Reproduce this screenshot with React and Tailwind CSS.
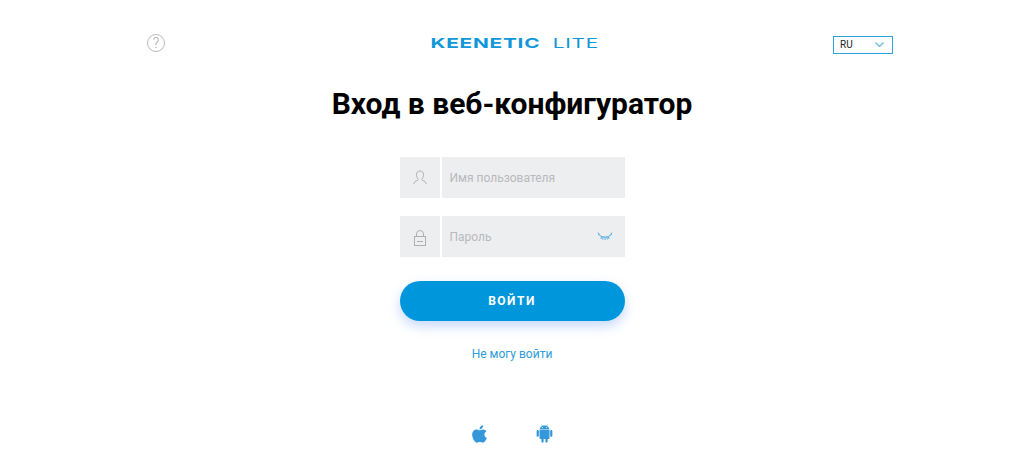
import { FaApple } from 'react-icons/fa'
import { AiFillAndroid } from 'react-icons/ai'

function UserIcon() {
  return (
    <svg className="w-[14px] h-[15px] text-[#adafb2]" viewBox="0 0 14 15" fill="none" stroke="currentColor" strokeWidth="1">
      <path d="M1 14c0-2 1.500-3 3.500-3.500.8-.3.8-1.200.3-1.800C3.800 7.500 3.500 6 3.500 4.500 3.500 2.300 5 1 7 1s3.500 1.300 3.500 3.500c0 1.500-.3 3-1.300 4.200-.5.600-.5 1.500.3 1.800 2 .5 3.500 1.500 3.500 3.500" />
    </svg>
  )
}

function LockIcon() {
  return (
    <svg className="w-[12px] h-[16px] text-[#adafb2] translate-y-[1px]" viewBox="0 0 12 16" fill="none" stroke="currentColor" strokeWidth="1">
      <rect x=".5" y="6.500" width="11" height="9" />
      <path d="M2.500 6.500V4a3.500 3.500 0 0 1 7 0v2.500M3 11.500h6" />
    </svg>
  )
}

function EyeClosedIcon() {
  return (
    <svg className="w-[16px] h-[9px] text-[#55aee3]" viewBox="0 0 16 9" fill="none" stroke="currentColor" strokeWidth="1">
      <path d="M1 2c2 2 4 3 7 3s5-1 7-3M1 .5l1.500 2M15 .5l-1.500 2M4.500 4.500 4 7M8 5v3M11.500 4.500 12 7M6 5l-.3 2.500M10 5l.3 2.500" />
    </svg>
  )
}

export default function App() {
  return (
    <div className="h-[455px] overflow-hidden bg-white font-['Roboto',sans-serif]">
      <header className="flex items-center justify-between pl-[147px] pr-[131px] pt-[33px] h-[54px]">
        <div className="w-[18px] h-[18px] -translate-y-[1px] rounded-full border border-[#b9b9c0] flex items-center justify-center text-[14px] font-light leading-none text-[#a5a5ac]">
          ?
        </div>
        <div className="ml-[31px] flex items-center gap-[8px] text-[#0f97d9] font-['Inter',sans-serif] text-[13.500px] leading-none scale-x-[1.54]">
          <span className="font-bold tracking-[0.5px]">KEENETIC</span>
          <span className="font-normal tracking-[0.5px]">LITE</span>
        </div>
        <div className="w-[60px] h-[18px] translate-y-[1px] border border-[#2ea3dc] flex items-center justify-between pl-[6px] pr-[8px] text-[10px] text-[#222]">
          <span>RU</span>
          <svg className="w-[9px] h-[5px] text-[#6fb7e3]" viewBox="0 0 9 5" fill="none" stroke="currentColor" strokeWidth="1.300">
            <path d="M.5.500 4.500 4.500 8.500.500" />
          </svg>
        </div>
      </header>

      <h1 className="mt-[30px] text-center text-[30px] leading-[40px] font-bold text-black">Вход в веб-конфигуратор</h1>

      <main className="w-[225px] mx-auto mt-[33px] flex flex-col">
        <div className="flex gap-[2px] h-[41px]">
          <div className="w-[40px] bg-[#edeef0] flex items-center justify-center">
            <UserIcon />
          </div>
          <div className="flex-1 bg-[#edeef0] flex items-center pl-[8px] text-[12px] text-[#b8b9bc]">Имя пользователя</div>
        </div>
        <div className="flex gap-[2px] h-[41px] mt-[18px]">
          <div className="w-[40px] bg-[#edeef0] flex items-center justify-center">
            <LockIcon />
          </div>
          <div className="flex-1 bg-[#edeef0] flex items-center justify-between pl-[8px] pr-[12px] text-[12px] text-[#b8b9bc]">
            <span>Пароль</span>
            <EyeClosedIcon />
          </div>
        </div>
        <button className="mt-[24px] h-[40px] rounded-full bg-[#0096db] text-white text-[12px] font-bold tracking-[1.500px] shadow-[0_5px_12px_rgba(60,130,240,0.3)]">
          ВОЙТИ
        </button>
        <a className="mt-[26px] text-center text-[12px] leading-[15px] text-[#2d9cd8]">Не могу войти</a>
      </main>

      <footer className="flex justify-center items-center gap-[45px] mt-[61px]">
        <FaApple className="w-[19px] h-[20px] text-[#3498db]" />
        <AiFillAndroid className="w-[21px] h-[21px] text-[#3498db]" />
      </footer>
    </div>
  )
}
